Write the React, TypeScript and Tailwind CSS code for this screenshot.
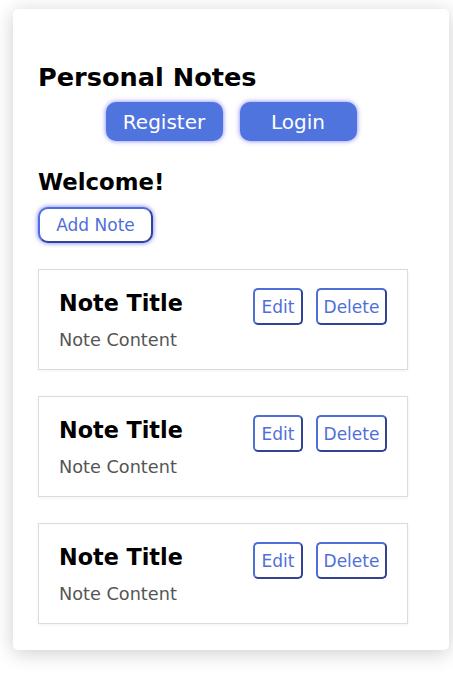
import React from "react";

const notes = [1, 2, 3].map((i) => ({ id: i, title: "Note Title", content: "Note Content" }));

const font = { fontFamily: '"DejaVu Sans", Verdana, sans-serif' };

function OutlineButton({ children, className = "" }: { children: React.ReactNode; className?: string }) {
  return (
    <button
      className={`bg-white text-[#4f6fd8] pt-[2px] border-2 border-[#4f6fd8] border-r-[#2f4594] border-b-[#2f4594] ${className}`}
    >
      {children}
    </button>
  );
}

export default function App() {
  return (
    <div className="min-h-[678px] bg-white pt-[9px] pl-[13px]" style={font}>
      <div className="w-[436px] h-[641px] bg-white rounded-[5px] shadow-[0_3px_20px_rgba(0,0,0,0.2)] pt-[53px] px-[25px]">
        <h1 className="text-[25.6px] leading-[30px] font-bold text-black">Personal Notes</h1>

        {/* auth buttons */}
        <div className="mt-[10px] flex justify-center gap-[17px]">
          <button className="w-[117px] h-[39px] rounded-[10px] bg-[#5074dd] text-white text-[20px] shadow-[0_0_5px_#7a7aff]">
            Register
          </button>
          <button className="w-[117px] h-[39px] rounded-[10px] bg-[#5074dd] text-white text-[20px] shadow-[0_0_5px_#7a7aff]">
            Login
          </button>
        </div>

        <h2 className="mt-[28px] text-[22.8px] leading-[27px] font-bold text-black">Welcome!</h2>
        <OutlineButton className="mt-[11px] w-[115px] h-[36px] rounded-[10px] text-[17px] shadow-[0_0_5px_#6a6aff]">
          Add Note
        </OutlineButton>

        <div className="mt-[26px] flex flex-col gap-[26px]">
          {notes.map((n) => (
            <div
              key={n.id}
              className="w-[370px] h-[101px] border border-[#dcdcdc] bg-white shadow-[0_1px_3px_rgba(0,0,0,0.06)] px-[20px] pt-[18px]"
            >
              <div className="flex items-start justify-between">
                <h3 className="mt-[2px] text-[22.3px] leading-[26px] font-bold text-black">{n.title}</h3>
                <div className="flex gap-[13px]">
                  <OutlineButton className="w-[50px] h-[37px] rounded-[5px] text-[17px]">Edit</OutlineButton>
                  <OutlineButton className="w-[71px] h-[37px] rounded-[5px] text-[17px]">Delete</OutlineButton>
                </div>
              </div>
              <p className="mt-[5px] text-[17.7px] leading-[21px] text-[#555]">{n.content}</p>
            </div>
          ))}
        </div>
      </div>
    </div>
  );
}
